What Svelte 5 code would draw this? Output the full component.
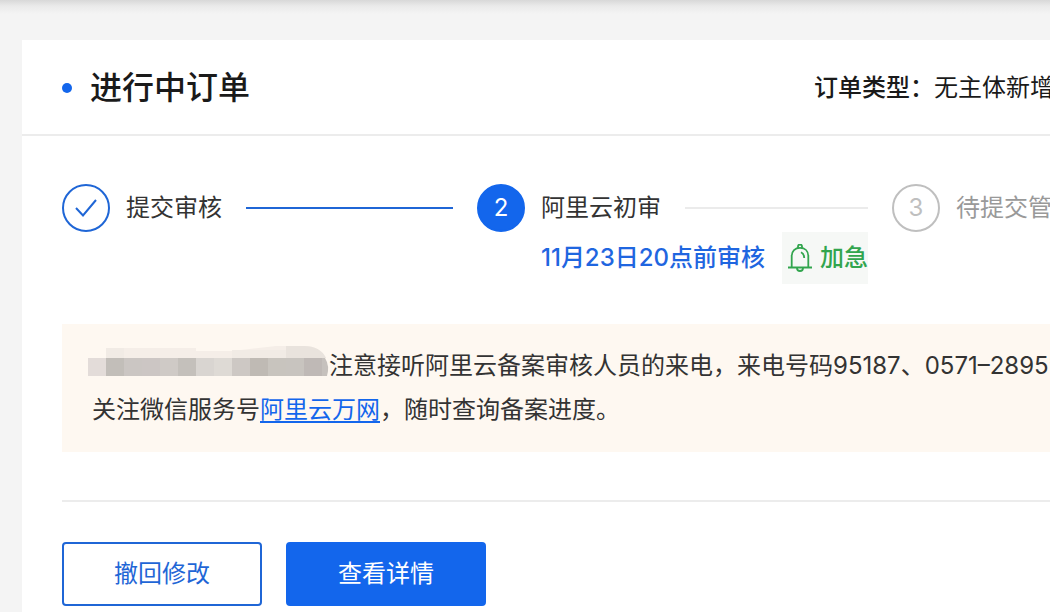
<script lang="ts">
  type Step = { label: string; state: 'done' | 'active' | 'wait'; deadline?: string };

  const steps: Step[] = [
    { label: '提交审核', state: 'done' },
    { label: '阿里云初审', state: 'active', deadline: '11月23日20点前审核' },
    { label: '待提交管局', state: 'wait' },
  ];

  // masked part of the contact line, one colour per 18px block
  const maskRow = ['#e3dcd9', '#c2beb9', '#cbc6c3', '#ccc6c4', '#cfcac6', '#c4c0bb', '#d9d5d1', '#dedad5', '#cdc8c4', '#bfbab4', '#c8c4be', '#c8c4bf', '#bfb9b6'];
</script>

<main class="page">
  <section class="card">
    <header class="card-header">
      <h1>进行中订单</h1>
      <p class="order-type"><strong>订单类型：</strong>无主体新增</p>
    </header>

    <div class="card-body">
      <ol class="steps">
        {#each steps as step, i}
          <li class="step {step.state}">
            <span class="circle">
              {#if step.state === 'done'}
                <svg width="24" height="24" viewBox="0 0 24 24" aria-hidden="true">
                  <path d="M2 12 9 19.5 22 4" fill="none" stroke="currentColor" stroke-width="2" />
                </svg>
              {:else}
                {i + 1}
              {/if}
            </span>
            <div class="step-main">
              <div class="step-title">
                <span>{step.label}</span>
                <i class="line"></i>
              </div>
              {#if step.deadline}
                <div class="step-sub">
                  <span>{step.deadline}</span>
                  <span class="urgent">
                    <svg width="24" height="28" viewBox="0 0 24 28" aria-hidden="true">
                      <g fill="none" stroke="currentColor" stroke-width="1.8">
                        <path d="M0 23.5H24M3.7 23.5V12C3.7 7 7 3.8 12 3.8S20.3 7 20.3 12V23.5" />
                        <path d="M10 4V2.5A1.7 1.7 0 0 1 14 2.5V4M9 24A3 3 0 0 0 15 24M13 8.2Q16.2 9.8 16.2 14" />
                      </g>
                    </svg>
                    加急
                  </span>
                </div>
              {/if}
            </div>
          </li>
        {/each}
      </ol>

      <div class="notice">
        <p>
          <svg class="mask" width="237" height="28" viewBox="0 0 237 28" aria-hidden="true">
            <path d="M14 0H104V3H140L184-2H212Q228-2 234 10H14Z" fill="#f5eee8" />
            <path d="M14 0H32V10H14ZM140 2H194V10H140Z" fill="#f1ebe5" />
            <path d="M194-2H212Q228-2 234 10H194Z" fill="#e9e3dd" />
            {#each maskRow as color, i}
              <rect x={i * 18 - 4} y="10" width="18" height="18" fill={color} />
            {/each}
            <path d="M230 10H233Q238 18 235 28H230Z" fill="#c6c1bd" />
          </svg>注意接听阿里云备案审核人员的来电，来电号码95187、0571–2895*
        </p>
        <p>关注微信服务号<a href="#wanwang">阿里云万网</a>，随时查询备案进度。</p>
      </div>

      <footer class="actions">
        <button type="button">撤回修改</button>
        <button type="button" class="primary">查看详情</button>
      </footer>
    </div>
  </section>
</main>

<style>
  :global(body) {
    margin: 0;
    background: #f4f4f4;
  }

  .page {
    padding: 40px 0 0 22px;
    overflow: hidden;
    background: linear-gradient(#d8d8d8, #eaeaea 6px, #f4f4f4 14px);
    font-family: Inter, "Noto Sans CJK SC", sans-serif;
    font-size: 24px;
    line-height: 48px;
    color: #333;
    white-space: nowrap;
  }

  h1, p, ol {
    margin: 0;
    padding: 0;
  }

  .card {
    background: #fff;
  }

  .card-header {
    display: flex;
    align-items: center;
    justify-content: space-between;
    padding: 24px 0 22px 40px;
    border-bottom: 2px solid #ececec;
    color: #1a1a1a;
  }

  h1 {
    display: flex;
    align-items: center;
    gap: 18px;
    font-size: 32px;
    font-weight: 500;
  }

  h1::before {
    content: "";
    width: 10px;
    height: 10px;
    border-radius: 50%;
    background: #1366ec;
  }

  .order-type {
    margin-right: -4px;
  }

  .order-type strong {
    font-weight: 500;
  }

  .card-body {
    padding: 48px 0 8px 40px;
  }

  .steps {
    display: flex;
    list-style: none;
  }

  .step {
    display: flex;
    flex: 0 0 42%;
    gap: 16px;
    box-sizing: border-box;
    padding-right: 24px;
  }

  .circle {
    display: flex;
    flex: none;
    align-items: center;
    justify-content: center;
    box-sizing: border-box;
    width: 48px;
    height: 48px;
    border: 2px solid #bfbfbf;
    border-radius: 50%;
    color: #bfbfbf;
  }

  .done .circle {
    border-color: #1f66d6;
    color: #1f66d6;
  }

  .active .circle {
    border-color: #1366ec;
    background: #1366ec;
    color: #fff;
  }

  .step-main {
    flex: 1;
    min-width: 0;
  }

  .step-title {
    display: flex;
    align-items: center;
    gap: 24px;
  }

  .wait .step-title {
    color: #999;
  }

  .line {
    flex: 1;
    height: 2px;
    background: #ebebeb;
  }

  .done .line {
    background: #1f66d6;
  }

  .step-sub {
    display: flex;
    justify-content: space-between;
    color: #1f66e0;
    font-weight: 500;
    line-height: 52px;
  }

  .urgent {
    display: flex;
    align-items: center;
    gap: 8px;
    padding-left: 6px;
    background: #f6f8f6;
    color: #32a54e;
  }

  .notice {
    margin-top: 40px;
    padding: 20px 0 20px 30px;
    overflow: hidden;
    background: #fef8f1;
    line-height: 44px;
  }

  .mask {
    margin-bottom: 10px;
    overflow: visible;
    vertical-align: middle;
  }

  .notice a {
    color: #1366ec;
    text-decoration: underline;
    text-decoration-thickness: 2px;
    text-underline-offset: 3px;
  }

  .actions {
    display: flex;
    gap: 24px;
    margin-top: 48px;
    padding-top: 40px;
    border-top: 2px solid #ececec;
  }

  button {
    width: 200px;
    height: 64px;
    border: 2px solid #1f66d6;
    border-radius: 4px;
    background: #fff;
    color: #1f66d6;
    font: inherit;
    cursor: pointer;
  }

  .primary {
    border-color: #1366ec;
    background: #1366ec;
    color: #fff;
  }
</style>
